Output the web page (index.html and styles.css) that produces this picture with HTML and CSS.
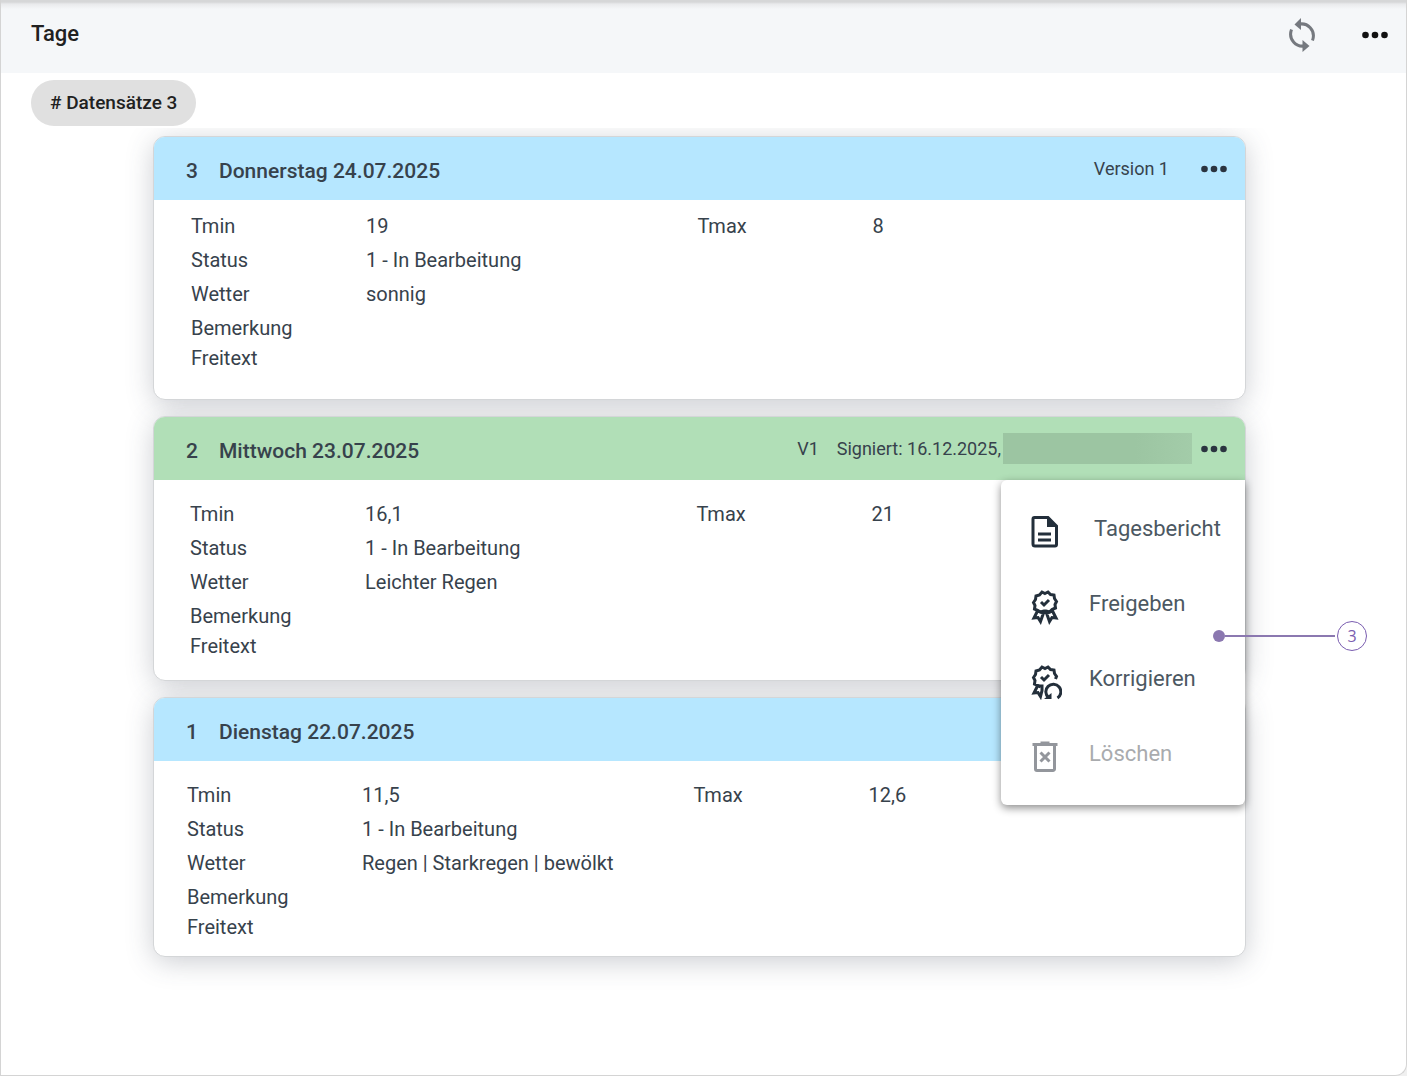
FILE: index.html
```html
<!DOCTYPE html>
<html lang="de">
<head>
  <meta charset="UTF-8" />
  <meta name="viewport" content="width=device-width, initial-scale=1.0"/>
  <title>Tage</title>

  <link rel="stylesheet" href="styles.css">
</head>
<body>
<div class="page">

  <!-- Page Header -->
  <header class="page-header">
    <h1>Tage</h1>
    <div class="page-actions">
      <button class="icon-button" type="button" aria-label="Aktualisieren">
        <svg class="refresh" viewBox="0 0 28 34">
          <path d="M9.500 6.500C20 3.500 28 13 24.500 22.500" />
          <path d="M18.500 27.500C8 30.500 0 21 3.500 11.500" />
          <path class="tip" d="M13 0v12L6.500 6.500z" />
          <path class="tip" d="M14.500 22v12l7-6z" />
        </svg>
      </button>
      <button class="icon-button" type="button" aria-label="Mehr">
        <svg class="dots" viewBox="0 0 26 8"><circle cx="3.500" cy="4" r="3.300"/><circle cx="13" cy="4" r="3.300"/><circle cx="22.500" cy="4" r="3.300"/></svg>
      </button>
    </div>
  </header>

  <div class="chips">
    <span class="chip"># Datensätze 3</span>
  </div>

  <!-- Day Cards -->
  <main class="days">

    <article class="card first">
      <div class="card-header">
        <span class="number">3</span>
        <h2>Donnerstag 24.07.2025</h2>
        <span class="version">Version 1</span>
        <button class="icon-button" type="button" aria-label="Menü Tag 3">
          <svg class="dots" viewBox="0 0 26 8"><circle cx="3.500" cy="4" r="3.300"/><circle cx="13" cy="4" r="3.300"/><circle cx="22.500" cy="4" r="3.300"/></svg>
        </button>
      </div>
      <dl class="fields">
        <dt>Tmin</dt><dd>19</dd>
        <dt>Tmax</dt><dd>8</dd>
        <dt>Status</dt><dd class="wide">1 - In Bearbeitung</dd>
        <dt>Wetter</dt><dd class="wide">sonnig</dd>
        <dt>Bemerkung</dt><dd class="wide"></dd>
        <dt class="short">Freitext</dt><dd class="wide"></dd>
      </dl>
    </article>

    <article class="card signed">
      <div class="card-header">
        <span class="number">2</span>
        <h2>Mittwoch 23.07.2025</h2>
        <span class="version">V1</span>
        <span class="signature">Signiert: 16.12.2025,</span>
        <span class="redacted"></span>
        <button class="icon-button" type="button" aria-label="Menü Tag 2" aria-expanded="true">
          <svg class="dots" viewBox="0 0 26 8"><circle cx="3.500" cy="4" r="3.300"/><circle cx="13" cy="4" r="3.300"/><circle cx="22.500" cy="4" r="3.300"/></svg>
        </button>
      </div>
      <dl class="fields">
        <dt>Tmin</dt><dd>16,1</dd>
        <dt>Tmax</dt><dd>21</dd>
        <dt>Status</dt><dd class="wide">1 - In Bearbeitung</dd>
        <dt>Wetter</dt><dd class="wide">Leichter Regen</dd>
        <dt>Bemerkung</dt><dd class="wide"></dd>
        <dt class="short">Freitext</dt><dd class="wide"></dd>
      </dl>

      <!-- Open context menu -->
      <div class="menu">
        <button class="report" type="button">
          <svg viewBox="0 0 34 36">
            <path d="M6.500 3.500H20L28.500 12V30.500a1.500 1.500 0 0 1-1.500 1.500H7a2 2 0 0 1-2-2V5a1.500 1.500 0 0 1 1.500-1.500z"/>
            <path class="solid" d="M19 3.500V13h9.500z"/>
            <path d="M10 20h13M10 26h13"/>
          </svg>
          Tagesbericht
        </button>
        <button type="button">
          <svg viewBox="0 0 34 36">
            <path d="M17 4.500l3-1.500 2.500 2.500 3.500.5.500 3.500 2 3-1.500 3 .5 3.500-3.500 1.500-2.500 2.500-3.500-1H16l-3.500 1L10 21.500 6.500 20l.5-3.500-1.500-3 2-3L8 7l3.500-1L14 3z"/>
            <path d="M13 13l3 3 5-5"/>
            <path d="M9.500 22L6 29l4-.5 2.500 4L15.500 24zM24.500 22l3.500 7-4-.5-2.500 4L18.500 24z"/>
          </svg>
          Freigeben
        </button>
        <button type="button">
          <svg viewBox="0 0 34 36">
            <path d="M12.500 23L10 21.500 6.500 20l.5-3.500-1.500-3 2-3L8 7l3.500-1L14 3l3 1.500 3-1.500 2.500 2.500 3.500.5.500 3.500 2 3-1 2.500"/>
            <path d="M13 13l3 3 5-5"/>
            <path d="M9.500 22L6 29l4-.5 2.500 4 1.500-6V22z"/>
            <path d="M20.500 33.500a7.500 7.500 0 1 1 9 .5"/>
            <path class="solid" d="M16 35h7.500v-6z"/>
          </svg>
          Korrigieren
        </button>
        <button type="button" disabled>
          <svg viewBox="0 0 34 36">
            <path d="M7.500 6.500V30a1.500 1.500 0 0 0 1.500 1.500h16a1.500 1.500 0 0 0 1.500-1.500V6.500M4.500 5.500h25"/>
            <path d="M12.500 4h9M12.500 13.500l9 9M21.500 13.500l-9 9"/>
          </svg>
          Löschen
        </button>

        <div class="callout">
          <span class="callout-dot"></span>
          <span class="callout-line"></span>
          <span class="callout-number">3</span>
        </div>
      </div>
    </article>

    <article class="card last">
      <div class="card-header">
        <span class="number">1</span>
        <h2>Dienstag 22.07.2025</h2>
      </div>
      <dl class="fields">
        <dt>Tmin</dt><dd>11,5</dd>
        <dt>Tmax</dt><dd>12,6</dd>
        <dt>Status</dt><dd class="wide">1 - In Bearbeitung</dd>
        <dt>Wetter</dt><dd class="wide">Regen | Starkregen | bewölkt</dd>
        <dt>Bemerkung</dt><dd class="wide"></dd>
        <dt class="short">Freitext</dt><dd class="wide"></dd>
      </dl>
    </article>

  </main>
</div>
</body>
</html>
```
FILE: styles.css
```css
:root {
  --blue: #b6e7ff;
  --green: #b1dfb7;
  --text-color: #37424c;
  --border-color: #d4d6d8;
  --purple: #7a5db0;
}

* {
  box-sizing: border-box;
}

body {
  margin: 0;
  font-family: Roboto, 'Liberation Sans', sans-serif;
  font-size: 20px;
  color: var(--text-color);
  background: #f0f0f0;
}

.page {
  display: flex;
  flex-direction: column;
  min-height: 100vh;
  background: white;
  border: 1px solid #d4d4d4;
  border-top: none;
  border-radius: 0 0 12px 0;
}

.page-header {
  display: flex;
  justify-content: space-between;
  align-items: center;
  height: 73px;
  padding: 0 18px 4px 30px;
  background: linear-gradient(#d6d7d8 2px, #e9eaec 4px, #f5f7f9 9px);
}

h1 {
  margin: 0;
  padding-bottom: 3px;
  font-size: 22px;
  font-weight: 500;
  color: #212121;
}

.page-actions {
  display: flex;
  align-items: center;
  gap: 46px;
}

.icon-button {
  display: flex;
  padding: 0;
  border: none;
  background: transparent;
  color: #2b3440;
  cursor: pointer;
}

.page-actions .icon-button {
  color: #111;
}

.dots {
  width: 26px;
  height: 8px;
  fill: currentColor;
}

.refresh {
  width: 28px;
  height: 34px;
  fill: none;
  stroke: #75797f;
  stroke-width: 3;
}

.refresh .tip {
  fill: #75797f;
  stroke: none;
}

.chips {
  padding: 7px 30px 2px;
}

.chip {
  display: inline-block;
  padding: 0 19px;
  line-height: 46px;
  border-radius: 23px;
  background: #e0e0e0;
  color: #212121;
  font-size: 19px;
  font-weight: 500;
  vertical-align: top;
}

.days {
  flex: 1;
  display: flex;
  flex-direction: column;
  gap: 16px;
  padding: 8px 160px 48px 152px;
  overflow: hidden;
  isolation: isolate;
}

.card {
  position: relative;
  background: white;
  border: 1px solid var(--border-color);
  border-radius: 12px;
}

/* shadow sits behind all of the cards */
.card::before {
  content: "";
  position: absolute;
  inset: 0;
  z-index: -1;
  border-radius: 12px;
  box-shadow: 0 5px 28px rgba(60, 70, 85, 0.28);
}

.card-header {
  display: flex;
  align-items: center;
  height: 63px;
  padding: 0 18px 0 32px;
  border-radius: 11px 11px 0 0;
  background: var(--blue);
  font-size: 18px;
}

.signed .card-header {
  background: var(--green);
}

.number,
h2 {
  padding-top: 4px;
  font-size: 21px;
  font-weight: 500;
}

.number {
  width: 33px;
}

h2 {
  margin: 0 auto 0 0;
}

.version {
  margin-right: 32px;
}

.signed .version {
  margin-right: 18px;
}

.redacted {
  width: 189px;
  height: 31px;
  margin: 0 9px 0 2px;
  background: linear-gradient(90deg, #9cc5a2 70%, #a3cca9);
}

.fields {
  display: grid;
  grid-template-columns: 175px 1fr 175px 1fr;
  margin: 0;
  padding: 9px 41px 28px 37px;
  line-height: 34px;
}

.signed .fields {
  padding: 17px 42px 21px 36px;
}

.last .fields {
  padding: 17px 45px 16px 33px;
}

.fields dd {
  margin: 0;
}

.fields .wide {
  grid-column: span 3;
}

.fields .short {
  line-height: 26px;
}

.menu {
  position: absolute;
  top: 63px;
  right: 0;
  z-index: 10;
  width: 244px;
  padding: 11px 0 14px;
  background: white;
  border-radius: 6px 0 6px 6px;
  box-shadow: 0 3px 8px rgba(0, 0, 0, 0.45);
}

.menu button {
  display: flex;
  align-items: center;
  gap: 27px;
  width: 100%;
  height: 75px;
  padding: 0 0 0 27px;
  border: none;
  background: transparent;
  font: inherit;
  font-size: 22px;
  color: #4c5862;
  cursor: pointer;
}

.menu .report {
  gap: 32px;
}

.menu button:disabled {
  color: #a9abae;
  cursor: default;
}

.menu svg {
  width: 34px;
  height: 36px;
  margin-top: 6px;
  fill: none;
  stroke: #232f3b;
  stroke-width: 3;
}

.menu .solid {
  fill: #232f3b;
  stroke: none;
}

.menu button:disabled svg {
  stroke: #93969c;
}

.callout {
  position: absolute;
  top: 141px;
  left: 212px;
  display: flex;
  align-items: center;
}

.callout-dot {
  width: 12px;
  height: 12px;
  border-radius: 50%;
  background: #8b78b0;
}

.callout-line {
  width: 110px;
  height: 2px;
  background: #8b78b0;
}

.callout-number {
  width: 30px;
  margin-left: 2px;
  border: 1px solid var(--purple);
  border-radius: 50%;
  font-family: 'Open Sans', sans-serif;
  font-size: 16px;
  line-height: 28px;
  text-align: center;
  color: var(--purple);
}
```
